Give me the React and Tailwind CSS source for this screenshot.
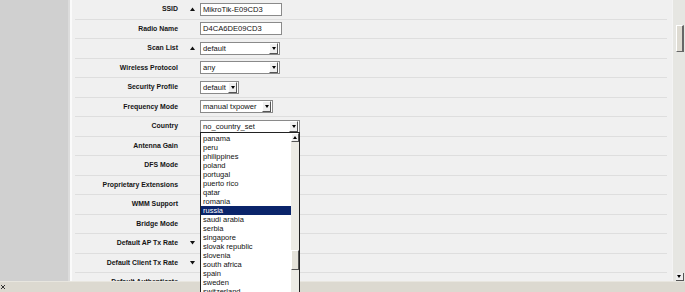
import React from "react";

const Up = () => (
  <svg width="5" height="4" viewBox="0 0 5 4" className="block">
    <polygon points="0,4 5,4 2.5,0.5" fill="#111" />
  </svg>
);
const Down = () => (
  <svg width="5" height="4" viewBox="0 0 5 4" className="block">
    <polygon points="0,0 5,0 2.5,3.5" fill="#111" />
  </svg>
);

const SelBtn = () => (
  <div className="w-[9px] h-[11px] bg-[#efefef] border-t border-l border-t-white border-l-white border-r border-b border-r-[#555] border-b-[#555] flex items-center justify-center">
    <svg width="4" height="3" viewBox="0 0 4 3" className="block">
      <polygon points="0,0 4,0 2,3" fill="#000" />
    </svg>
  </div>
);

const Input = ({ w, value }) => (
  <div
    className={`h-[13px] bg-white border border-[#8a8a8a] flex items-center pl-[2px] text-[7.6px] text-[#111] ${w}`}
  >
    {value}
  </div>
);

const Select = ({ w, value }) => (
  <div
    className={`h-[13px] bg-white border border-[#8a8a8a] flex items-center justify-between pl-[2px] pr-px text-[7.6px] text-[#111] ${w}`}
  >
    <span>{value}</span>
    <SelBtn />
  </div>
);

const rows = [
  { label: "SSID", arrow: "up", field: <Input w="w-[82px]" value="MikroTik-E09CD3" /> },
  { label: "Radio Name", field: <Input w="w-[82px]" value="D4CA6DE09CD3" /> },
  { label: "Scan List", arrow: "up", field: <Select w="w-[80px]" value="default" /> },
  { label: "Wireless Protocol", field: <Select w="w-[80px]" value="any" /> },
  { label: "Security Profile", field: <Select w="w-[39px]" value="default" /> },
  { label: "Frequency Mode", field: <Select w="w-[73px]" value="manual txpower" /> },
  { label: "Country", field: <Select w="w-[100px]" value="no_country_set" /> },
  { label: "Antenna Gain" },
  { label: "DFS Mode" },
  { label: "Proprietary Extensions" },
  { label: "WMM Support" },
  { label: "Bridge Mode" },
  { label: "Default AP Tx Rate", arrow: "down" },
  { label: "Default Client Tx Rate", arrow: "down" },
  { label: "Default Authenticate" },
  { label: "Default Forward" },
];

const countries = [
  "panama",
  "peru",
  "philippines",
  "poland",
  "portugal",
  "puerto rico",
  "qatar",
  "romania",
  "russia",
  "saudi arabia",
  "serbia",
  "singapore",
  "slovak republic",
  "slovenia",
  "south africa",
  "spain",
  "sweden",
  "switzerland",
];

export default function App() {
  return (
    <div
      className="relative w-[685px] h-[292px] overflow-hidden flex flex-col bg-[#f0f0f0]"
      style={{ fontFamily: '"Liberation Sans", Arial, sans-serif' }}
    >
      <div className="flex flex-1 min-h-0">
        <div className="w-[68px] bg-[#d0d0d0]" />
        <div className="w-[2px] bg-[#dcdcdc]" />
        <div className="w-[2px] bg-[#fafafa]" />
        <div className="flex-1 min-w-0 overflow-hidden bg-[#f0f0f0]">
          <div className="ml-[3px] mr-[5px] flex flex-col">
            {rows.map((r) => (
              <div
                key={r.label}
                className="h-[19.5px] shrink-0 flex items-center border-b border-[#dedede]"
              >
                <div className="w-[103px] text-right font-bold text-[6.9px] text-[#141414] whitespace-nowrap">
                  {r.label}
                </div>
                <div className="ml-[12px] w-[10px] flex">
                  {r.arrow === "up" && <Up />}
                  {r.arrow === "down" && <Down />}
                </div>
                {r.field}
              </div>
            ))}
          </div>
        </div>
        <div className="w-[13px] bg-[#e6e6e2] border-l border-[#f4f4f4] flex flex-col items-center relative">
          <div className="mt-[25px] ml-[1px] w-[8px] h-[27px] bg-[#dedbd2] border-l border-t border-l-white border-t-white border-r-2 border-b border-r-[#666] border-b-[#666]" />
          <div className="mt-auto ml-[1px] w-[8px] h-[8px] bg-[#eeeeee] border-r border-b border-[#555] flex items-center justify-center">
            <svg width="4" height="3" viewBox="0 0 4 3" className="block">
              <polygon points="0,0 4,0 2,3" fill="#000" />
            </svg>
          </div>
        </div>
      </div>
      <div className="h-[11px] shrink-0 bg-[#dcd9d0] border-t border-[#e8e6df] flex items-center pl-[1px]">
        <svg width="4" height="4" viewBox="0 0 4 4" className="block">
          <path d="M0 0L4 4M4 0L0 4" stroke="#333" strokeWidth="1" />
        </svg>
      </div>

      <div className="absolute left-[200px] top-[132px] w-[100px] h-[170px] bg-white border border-[#222] z-10 flex">
        <div className="flex-1 flex flex-col text-[7.5px] text-[#111] leading-[9px] pt-[1px]">
          {countries.map((c) => (
            <div
              key={c}
              className={`h-[9px] pl-[2px] whitespace-nowrap ${
                c === "russia" ? "bg-[#0a246a] text-white" : ""
              }`}
            >
              {c}
            </div>
          ))}
        </div>
        <div className="w-[8px] bg-[#ecebe5] flex flex-col">
          <div className="h-[9px] bg-[#eeeeee] border-t border-l border-t-white border-l-white border-r border-b border-r-[#555] border-b-[#555] flex items-center justify-center">
            <svg width="4" height="3" viewBox="0 0 4 3" className="block">
              <polygon points="0,3 4,3 2,0" fill="#000" />
            </svg>
          </div>
          <div className="mt-[108px] h-[20px] bg-[#e4e2da] border-l border-t border-l-white border-t-white border-r border-b border-r-[#555] border-b-[#555]" />
        </div>
      </div>
    </div>
  );
}
